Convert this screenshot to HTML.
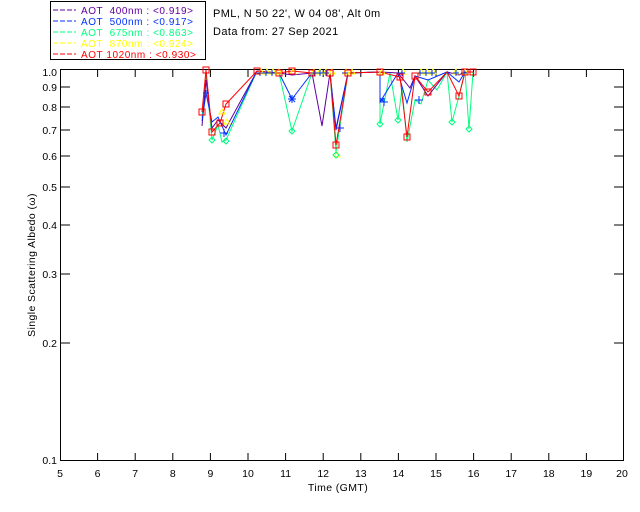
<!DOCTYPE html>
<html><head><style>
body{margin:0;background:#fff;}
svg{display:block;font-family:"Liberation Sans",sans-serif;font-size:11px;}
</style></head><body>
<svg width="640" height="512" viewBox="0 0 640 512" xmlns="http://www.w3.org/2000/svg">
<rect width="640" height="512" fill="#fff"/>
<rect x="50.5" y="1.5" width="155" height="58" fill="none" stroke="#000"/>
<g font-size="10" letter-spacing="0.55">
<line x1="53" y1="10" x2="76" y2="10" stroke="#6000a0" stroke-dasharray="5,2"/>
<text x="81" y="14" fill="#6000a0" xml:space="preserve">AOT  400nm : &lt;0.919&gt;</text>
<line x1="53" y1="21" x2="76" y2="21" stroke="#0030ff" stroke-dasharray="5,2"/>
<text x="81" y="25" fill="#0030ff" xml:space="preserve">AOT  500nm : &lt;0.917&gt;</text>
<line x1="53" y1="32" x2="76" y2="32" stroke="#00ff80" stroke-dasharray="5,2"/>
<text x="81" y="36" fill="#00ff80" xml:space="preserve">AOT  675nm : &lt;0.863&gt;</text>
<line x1="53" y1="43" x2="76" y2="43" stroke="#ffff00" stroke-dasharray="5,2"/>
<text x="81" y="47" fill="#ffff00" xml:space="preserve">AOT  870nm : &lt;0.924&gt;</text>
<line x1="53" y1="54" x2="76" y2="54" stroke="#ff0000" stroke-dasharray="5,2"/>
<text x="81" y="58" fill="#ff0000" xml:space="preserve">AOT 1020nm : &lt;0.930&gt;</text>
</g>
<text x="213" y="17" letter-spacing="0.4">PML, N 50 22', W 04 08', Alt 0m</text>
<text x="213" y="35" letter-spacing="0.4">Data from: 27 Sep 2021</text>
<rect x="60.5" y="69.5" width="563" height="391" fill="none" stroke="#000"/>
<g stroke="#000">
<path d="M97.6 461v-8M135.2 461v-8M172.8 461v-8M210.4 461v-8M248 461v-8M285.6 461v-8M323.2 461v-8M360.8 461v-8M398.4 461v-8M436 461v-8M473.6 461v-8M511.2 461v-8M548.8 461v-8M586.4 461v-8"/>
<path d="M97.6 69v8M135.2 69v8M172.8 69v8M210.4 69v8M248 69v8M285.6 69v8M323.2 69v8M360.8 69v8M398.4 69v8M436 69v8M473.6 69v8M511.2 69v8M548.8 69v8M586.4 69v8"/>
<path d="M61 87h9M61 107h9M61 130h9M61 156h9M61 187h9M61 225h9M61 274h9M61 343h9M623 87h-9M623 107h-9M623 130h-9M623 156h-9M623 187h-9M623 225h-9M623 274h-9M623 343h-9"/>
</g>
<g text-anchor="end" font-size="10.5">
<text x="57" y="76">1.0</text><text x="57" y="91">0.9</text><text x="57" y="111">0.8</text><text x="57" y="134">0.7</text><text x="57" y="160">0.6</text><text x="57" y="191">0.5</text><text x="57" y="229">0.4</text><text x="57" y="278">0.3</text><text x="57" y="347">0.2</text><text x="57" y="464">0.1</text>
</g>
<g text-anchor="middle" font-size="10.5">
<text x="60" y="477">5</text><text x="97.6" y="477">6</text><text x="135.2" y="477">7</text><text x="172.8" y="477">8</text><text x="210.4" y="477">9</text><text x="248" y="477">10</text><text x="285.6" y="477">11</text><text x="323.2" y="477">12</text><text x="360.8" y="477">13</text><text x="398.4" y="477">14</text><text x="436" y="477">15</text><text x="473.6" y="477">16</text><text x="511.2" y="477">17</text><text x="548.8" y="477">18</text><text x="586.4" y="477">19</text><text x="622" y="477">20</text>
<text x="338" y="491" letter-spacing="0.4">Time (GMT)</text>
</g>
<text transform="translate(35,265) rotate(-90)" text-anchor="middle" font-size="10.5" letter-spacing="0.4">Single Scattering Albedo (ω)</text>
<g fill="none" stroke-width="1">
<polyline stroke="#00ff80" points="202,118 206,75 212,140 218,125 222,142 226,140 257,71 279,73 292,131 312,73 330,73 336,152 348,73 380,72 380,124 390,73 398,120 402,88 407,142 415,100 421,104 428,80 437,90 447,72 452,122 459,96 465,72 469,129 473,72"/>
<polyline stroke="#6000a0" points="202,126 206,80 212,128 218,120 226,128 257,71 279,73 292,75 312,73 322,126 330,73 336,130 348,73 380,72 398,73 410,88 415,76 428,96 447,72 459,75 465,72 473,72"/>
<polyline stroke="#0030ff" points="202,121 206,93 212,122 218,117 226,135 257,71 279,73 292,99 312,73 330,73 336,128 348,73 380,72 380,102 398,73 407,103 415,76 428,80 447,72 459,82 465,72 473,72"/>
<polyline stroke="#ff0000" points="202,112 206,70 212,132 220,123 226,104 257,71 279,73 292,71 312,73 330,73 336,145 348,73 380,72 400,77 407,137 415,76 428,92 447,72 459,96 465,72 473,72"/>
</g>
<g fill="none" stroke="#ffff00">
<path d="M258 74l3-5 3 5zM264 74l3-5 3 5zM270 74l3-5 3 5zM276 74l3-5 3 5zM290 74l3-5 3 5zM311 74l3-5 3 5zM317 74l3-5 3 5zM323 74l3-5 3 5zM329 74l3-5 3 5zM343 74l3-5 3 5zM349 74l3-5 3 5zM379 74l3-5 3 5zM400 74l3-5 3 5zM418 74l3-5 3 5zM424 74l3-5 3 5zM430 74l3-5 3 5zM453 74l3-5 3 5zM462 74l3-5 3 5zM219 114l3-5 3 5zM224 124l3-5 3 5zM334 157l3-5 3 5z"/>
</g>
<g fill="none" stroke="#0030ff">
<path d="M260 70v6M257 73h6M266 70v6M263 73h6M272 70v6M269 73h6M314 70v6M311 73h6M320 70v6M317 73h6M326 70v6M323 73h6M345 70v6M342 73h6M402 70v6M399 73h6M420 70v6M417 73h6M426 70v6M423 73h6M432 70v6M429 73h6M456 70v6M453 73h6M464 70v6M461 73h6"/>
</g>
<g fill="none" stroke="#ff0000">
<rect x="199" y="109" width="6" height="6"/><rect x="203" y="67" width="6" height="6"/><rect x="209" y="129" width="6" height="6"/><rect x="217" y="120" width="6" height="6"/><rect x="223" y="101" width="6" height="6"/><rect x="254" y="68" width="6" height="6"/><rect x="276" y="70" width="6" height="6"/><rect x="289" y="68" width="6" height="6"/><rect x="309" y="70" width="6" height="6"/><rect x="327" y="70" width="6" height="6"/><rect x="333" y="142" width="6" height="6"/><rect x="345" y="70" width="6" height="6"/><rect x="377" y="69" width="6" height="6"/><rect x="397" y="74" width="6" height="6"/><rect x="404" y="134" width="6" height="6"/><rect x="412" y="73" width="6" height="6"/><rect x="425" y="89" width="6" height="6"/><rect x="456" y="93" width="6" height="6"/><rect x="462" y="69" width="6" height="6"/><rect x="470" y="69" width="6" height="6"/>
</g>
<g fill="none" stroke="#0030ff">
<path d="M289 96l6 6M295 96l-6 6M288 99h8M292 95v8M380 98l4 4M384 98l-4 4M380 102h8M384 98v8M336 128h8M340 124v8M415 100h8M419 96v8M220 133h8M224 129v8M203 93h6M206 90v6"/>
</g>
<g fill="none" stroke="#00ff80">
<path d="M292 128l3 3-3 3-3-3zM336 152l3 3-3 3-3-3zM380 121l3 3-3 3-3-3zM469 126l3 3-3 3-3-3zM452 119l3 3-3 3-3-3zM212 137l3 3-3 3-3-3zM226 138l3 3-3 3-3-3zM398 117l3 3-3 3-3-3z"/>
</g>
</svg>
</body></html>
